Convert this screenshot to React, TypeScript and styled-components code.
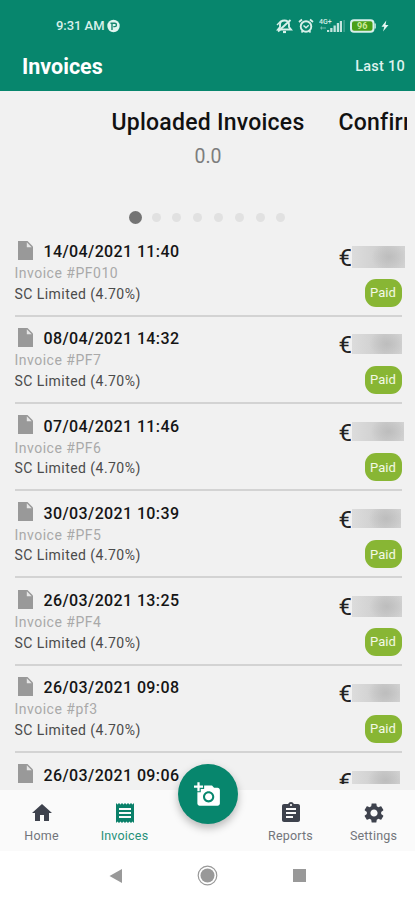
import React from "react";
import styled, { createGlobalStyle } from "styled-components";
import {
  MdAddAPhoto,
  MdAssignment,
  MdHome,
  MdReceipt,
  MdSettings,
} from "react-icons/md";

const GlobalStyle = createGlobalStyle`
  * { box-sizing: border-box; }
  body { margin: 0; background: #fff; font-family: Roboto, "Noto Sans", sans-serif; }
`;

const Screen = styled.div`
  width: 415px;
  height: 900px;
  display: flex;
  flex-direction: column;
  overflow: hidden;
  background: #f1f1f1;
`;

const Header = styled.header`
  height: 91px;
  flex: none;
  background: #07866d;
  color: #fff;
`;

const StatusBar = styled.div`
  height: 51px;
  display: flex;
  justify-content: space-between;
  align-items: center;
  padding: 0 26px 0 56px;
`;

const StatusGroup = styled.div<{ $gap: number }>`
  display: flex;
  align-items: center;
  gap: ${(p) => p.$gap}px;
  color: #d8f0ea;
`;

const Clock = styled.span`
  font-size: 13px;
  line-height: 18px;
  font-weight: 500;
  letter-spacing: -0.05px;
  white-space: nowrap;
`;

const TitleBar = styled.div`
  height: 32px;
  display: flex;
  justify-content: space-between;
  align-items: center;
  padding: 0 10px 0 22px;
`;

const PageTitle = styled.h1`
  margin: 0;
  font-size: 21.5px;
  line-height: 28px;
  font-weight: 700;
`;

const RangeButton = styled.button`
  border: 0;
  padding: 0;
  background: none;
  color: #dff2ed;
  font: 500 14.5px/20px Roboto, sans-serif;
  letter-spacing: 0.25px;
`;

const Carousel = styled.section`
  height: 138.3px;
  flex: none;
  display: flex;
  flex-direction: column;
  padding-top: 17px;
`;

const Slides = styled.div`
  display: flex;
  margin: 0 8px 0 111.5px;
  gap: 34px;
  overflow: hidden;
`;

const Slide = styled.div`
  flex: none;
  display: flex;
  flex-direction: column;
  align-items: center;
`;

const SlideTitle = styled.h2`
  margin: 0;
  font-size: 23px;
  line-height: 30px;
  font-weight: 500;
  letter-spacing: 0.24px;
  color: #111;
  white-space: nowrap;
`;

const SlideValue = styled.div`
  margin-top: 6px;
  font-size: 19.5px;
  line-height: 25px;
  color: #7d7d7d;
`;

const Dots = styled.div`
  display: flex;
  align-items: center;
  height: 14px;
  margin: 41px 0 0 125px;
`;

const DotSlot = styled.div`
  width: 20.8px;
  display: flex;
  justify-content: center;
`;

const Dot = styled.i<{ $active: boolean }>`
  flex: none;
  width: ${(p) => (p.$active ? 13 : 9)}px;
  height: ${(p) => (p.$active ? 13 : 9)}px;
  border-radius: 50%;
  background: ${(p) => (p.$active ? "#747474" : "#e1e1e1")};
`;

const List = styled.main`
  flex: 1;
  min-height: 0;
  margin-bottom: 6px;
  overflow: hidden;
  padding: 0 13.5px 0 14.5px;
`;

const Row = styled.article`
  height: 87.25px;
  display: flex;
  justify-content: space-between;
  padding-top: 11.9px;
  border-bottom: 2px solid #d3d3d3;
`;

const Details = styled.div`
  display: flex;
  flex-direction: column;
`;

const DateLine = styled.div`
  height: 22px;
  display: flex;
  align-items: center;
  gap: 11px;
  padding-left: 3px;
`;

const FileGlyph = styled.svg`
  flex: none;
  width: 15px;
  height: 19px;
  margin-top: -4px;
`;

const DateText = styled.span`
  color: #151515;
  font-size: 16px;
  line-height: 22px;
  font-weight: 500;
  letter-spacing: 0.38px;
  white-space: nowrap;
`;

const InfoText = styled.div<{ $muted?: boolean }>`
  font-size: 14px;
  line-height: 20.4px;
  letter-spacing: ${(p) => (p.$muted ? 0.5 : 0.45)}px;
  color: ${(p) => (p.$muted ? "#a9a9a9" : "#4b4b4b")};
  white-space: nowrap;
`;

const Side = styled.div`
  width: 62px;
  display: flex;
  flex-direction: column;
  align-items: flex-end;
`;

const Amount = styled.div`
  width: 62px;
  height: 30px;
  display: flex;
  align-items: center;
  margin-top: 1px;
`;

const Currency = styled.span`
  flex: none;
  width: 12px;
  margin: 2px 1px 0 -1px;
  overflow: hidden;
  font-size: 24px;
  line-height: 30px;
  color: #222;
`;

const Redaction = styled.span<{ $width: number; $height: number }>`
  flex: none;
  width: ${(p) => p.$width}px;
  height: ${(p) => p.$height}px;
  background: radial-gradient(ellipse 18px 14px at 70% 50%, #bdbdbd, rgba(200, 200, 200, 0)),
    linear-gradient(90deg, #dcdcdc, #cccccc 65%, #d2d2d2);
  filter: blur(0.6px);
`;

const Badge = styled.span`
  width: 37px;
  height: 28px;
  margin-top: 6.5px;
  display: flex;
  align-items: center;
  justify-content: center;
  border-radius: 11px;
  background: #88b634;
  color: #f3f9e6;
  font-size: 13px;
  letter-spacing: 0.1px;
`;

const TabBar = styled.nav`
  height: 61px;
  flex: none;
  display: grid;
  grid-template-columns: repeat(5, 1fr);
  background: #fafafa;
`;

const Tab = styled.div<{ $active?: boolean }>`
  display: flex;
  flex-direction: column;
  align-items: center;
  padding-top: 10.5px;
  color: ${(p) => (p.$active ? "#0a8069" : "#3e424d")};
  svg { width: 24px; height: 24px; flex: none; }
`;

const TabLabel = styled.span<{ $active?: boolean }>`
  margin-top: 2px;
  font-size: 12.5px;
  line-height: 18px;
  letter-spacing: 0.2px;
  color: ${(p) => (p.$active ? "#279079" : "#72757a")};
`;

const CameraButton = styled.div`
  width: 60px;
  height: 60px;
  margin: -26px auto 0;
  border-radius: 50%;
  display: flex;
  align-items: center;
  justify-content: center;
  background: #07866d;
  color: #fff;
  box-shadow: 0 4px 8px rgba(0, 0, 0, 0.27);
  z-index: 1;
`;

const SystemNav = styled.footer`
  height: 49px;
  flex: none;
  display: grid;
  grid-template-columns: repeat(3, 91.5px);
  justify-content: center;
  align-items: center;
  justify-items: center;
  background: #fff;
`;

const FileIcon = () => (
  <FileGlyph viewBox="0 0 15 19">
    <path d="M0 0h9.500L15 5.500V19H0z" fill="#999" />
    <path d="M8.800 1.300v4.900h4.900z" fill="#e6e6e6" />
  </FileGlyph>
);

const ProfileMark = () => (
  <svg width="13" height="14" viewBox="0 0 13 14">
    <circle cx="6.500" cy="7" r="6.200" fill="#e2f5f0" />
    <path d="M5 11V4.500M3.500 4.300h4.300a1.600 1.600 0 0 1 0 3.300H6.300" fill="none" stroke="#16866e" strokeWidth="1.400" />
  </svg>
);

const MutedBell = () => (
  <svg width="17" height="16" viewBox="0 0 17 16" fill="none" stroke="currentColor">
    <path d="M2 11.500h13l-2-2.500V6.500C13 4 11 2.500 8.500 2.500S4 4 4 6.500V9z" strokeWidth="1.900" />
    <path d="M7 14h3" strokeWidth="2.200" />
    <path d="M2 13.500L14.500 2" strokeWidth="1.900" />
    <path d="M1 7l4-4" strokeWidth="1.500" />
  </svg>
);

const AlarmClock = () => (
  <svg width="16" height="16" viewBox="0 0 16 16" fill="none" stroke="currentColor">
    <circle cx="8" cy="8.500" r="5.300" strokeWidth="1.900" />
    <path d="M1 4l3-2.500M15 4l-3-2.500M3.500 14.500l1.300-1.500M12.500 14.500l-1.300-1.500" strokeWidth="1.800" />
    <path d="M5.500 7.500L8 9.700l2.700-2.400" strokeWidth="1.500" />
  </svg>
);

const CellSignal = () => (
  <svg width="26" height="15" viewBox="0 0 26 15" fill="currentColor">
    <text x="0" y="5.500" fontSize="7" fontWeight="500" fontFamily="Roboto">4G+</text>
    <path d="M1 10l2-2v1.400h4v1.200H3V12z" opacity="0.5" />
    <path d="M8 12h2.200v2H8zM11.200 10h2.300v4h-2.300zM14.500 7.500h2.300V14h-2.300zM17.800 5H20v9h-2.200zM20.800 3H23v11h-2.200z" opacity="0.9" />
    <path d="M24.500 2h1.200v12h-1.200z" opacity="0.35" />
  </svg>
);

const Battery = () => (
  <svg width="26" height="14" viewBox="0 0 26 14">
    <rect x="1" y="1.200" width="22.500" height="11.600" rx="3" fill="#4a9f18" stroke="#d8f0ea" strokeWidth="2" />
    <path d="M24.500 4.500h1.300v5h-1.300z" fill="#d8f0ea" />
    <text x="12.200" y="10.300" fontSize="9" fontWeight="700" textAnchor="middle" fill="#cde99b" fontFamily="Roboto">96</text>
  </svg>
);

const Bolt = () => (
  <svg width="8" height="12" viewBox="0 0 8 12">
    <path d="M5.300 0.500L0.500 6.800h2.800L2 11.500 7.500 5H4.500z" fill="#e6f8f3" />
  </svg>
);

type Invoice = { date: string; number?: string; width: number; height: number };

const invoices: Invoice[] = [
  { date: "14/04/2021 11:40", number: "PF010", width: 53, height: 22 },
  { date: "08/04/2021 14:32", number: "PF7", width: 50, height: 20 },
  { date: "07/04/2021 11:46", number: "PF6", width: 52, height: 19 },
  { date: "30/03/2021 10:39", number: "PF5", width: 49, height: 19 },
  { date: "26/03/2021 13:25", number: "PF4", width: 50, height: 21 },
  { date: "26/03/2021 09:08", number: "pf3", width: 48, height: 18 },
  { date: "26/03/2021 09:06", width: 48, height: 19 },
];

export default function App() {
  return (
    <>
      <GlobalStyle />
      <Screen>
        <Header>
          <StatusBar>
            <StatusGroup $gap={3}>
              <Clock>9:31 AM</Clock>
              <ProfileMark />
            </StatusGroup>
            <StatusGroup $gap={5}>
              <MutedBell />
              <AlarmClock />
              <CellSignal />
              <Battery />
              <Bolt />
            </StatusGroup>
          </StatusBar>
          <TitleBar>
            <PageTitle>Invoices</PageTitle>
            <RangeButton>Last 10</RangeButton>
          </TitleBar>
        </Header>
        <Carousel>
          <Slides>
            <Slide>
              <SlideTitle>Uploaded Invoices</SlideTitle>
              <SlideValue>0.0</SlideValue>
            </Slide>
            <Slide>
              <SlideTitle>Confirm</SlideTitle>
            </Slide>
          </Slides>
          <Dots>
            {Array.from({ length: 8 }, (_, i) => (
              <DotSlot key={i}>
                <Dot $active={i === 0} />
              </DotSlot>
            ))}
          </Dots>
        </Carousel>
        <List>
          {invoices.map((invoice) => (
            <Row key={invoice.date}>
              <Details>
                <DateLine>
                  <FileIcon />
                  <DateText>{invoice.date}</DateText>
                </DateLine>
                {invoice.number && (
                  <>
                    <InfoText $muted>Invoice #{invoice.number}</InfoText>
                    <InfoText>SC Limited (4.70%)</InfoText>
                  </>
                )}
              </Details>
              <Side>
                <Amount>
                  <Currency>€</Currency>
                  <Redaction $width={invoice.width} $height={invoice.height} />
                </Amount>
                {invoice.number && <Badge>Paid</Badge>}
              </Side>
            </Row>
          ))}
        </List>
        <TabBar>
          <Tab>
            <MdHome />
            <TabLabel>Home</TabLabel>
          </Tab>
          <Tab $active>
            <MdReceipt />
            <TabLabel $active>Invoices</TabLabel>
          </Tab>
          <CameraButton>
            <MdAddAPhoto size={27} />
          </CameraButton>
          <Tab>
            <MdAssignment />
            <TabLabel>Reports</TabLabel>
          </Tab>
          <Tab>
            <MdSettings />
            <TabLabel>Settings</TabLabel>
          </Tab>
        </TabBar>
        <SystemNav>
          <svg width="14" height="16" viewBox="0 0 14 16">
            <path d="M13 1v14L0.500 8z" fill="#999" />
          </svg>
          <svg width="21" height="21" viewBox="0 0 21 21">
            <circle cx="10.500" cy="10.500" r="9.300" fill="#fff" stroke="#999" strokeWidth="1.200" />
            <circle cx="10.500" cy="10.500" r="7" fill="#999" />
          </svg>
          <svg width="13" height="13" viewBox="0 0 13 13">
            <path d="M0 0h13v13H0z" fill="#999" />
          </svg>
        </SystemNav>
      </Screen>
    </>
  );
}
